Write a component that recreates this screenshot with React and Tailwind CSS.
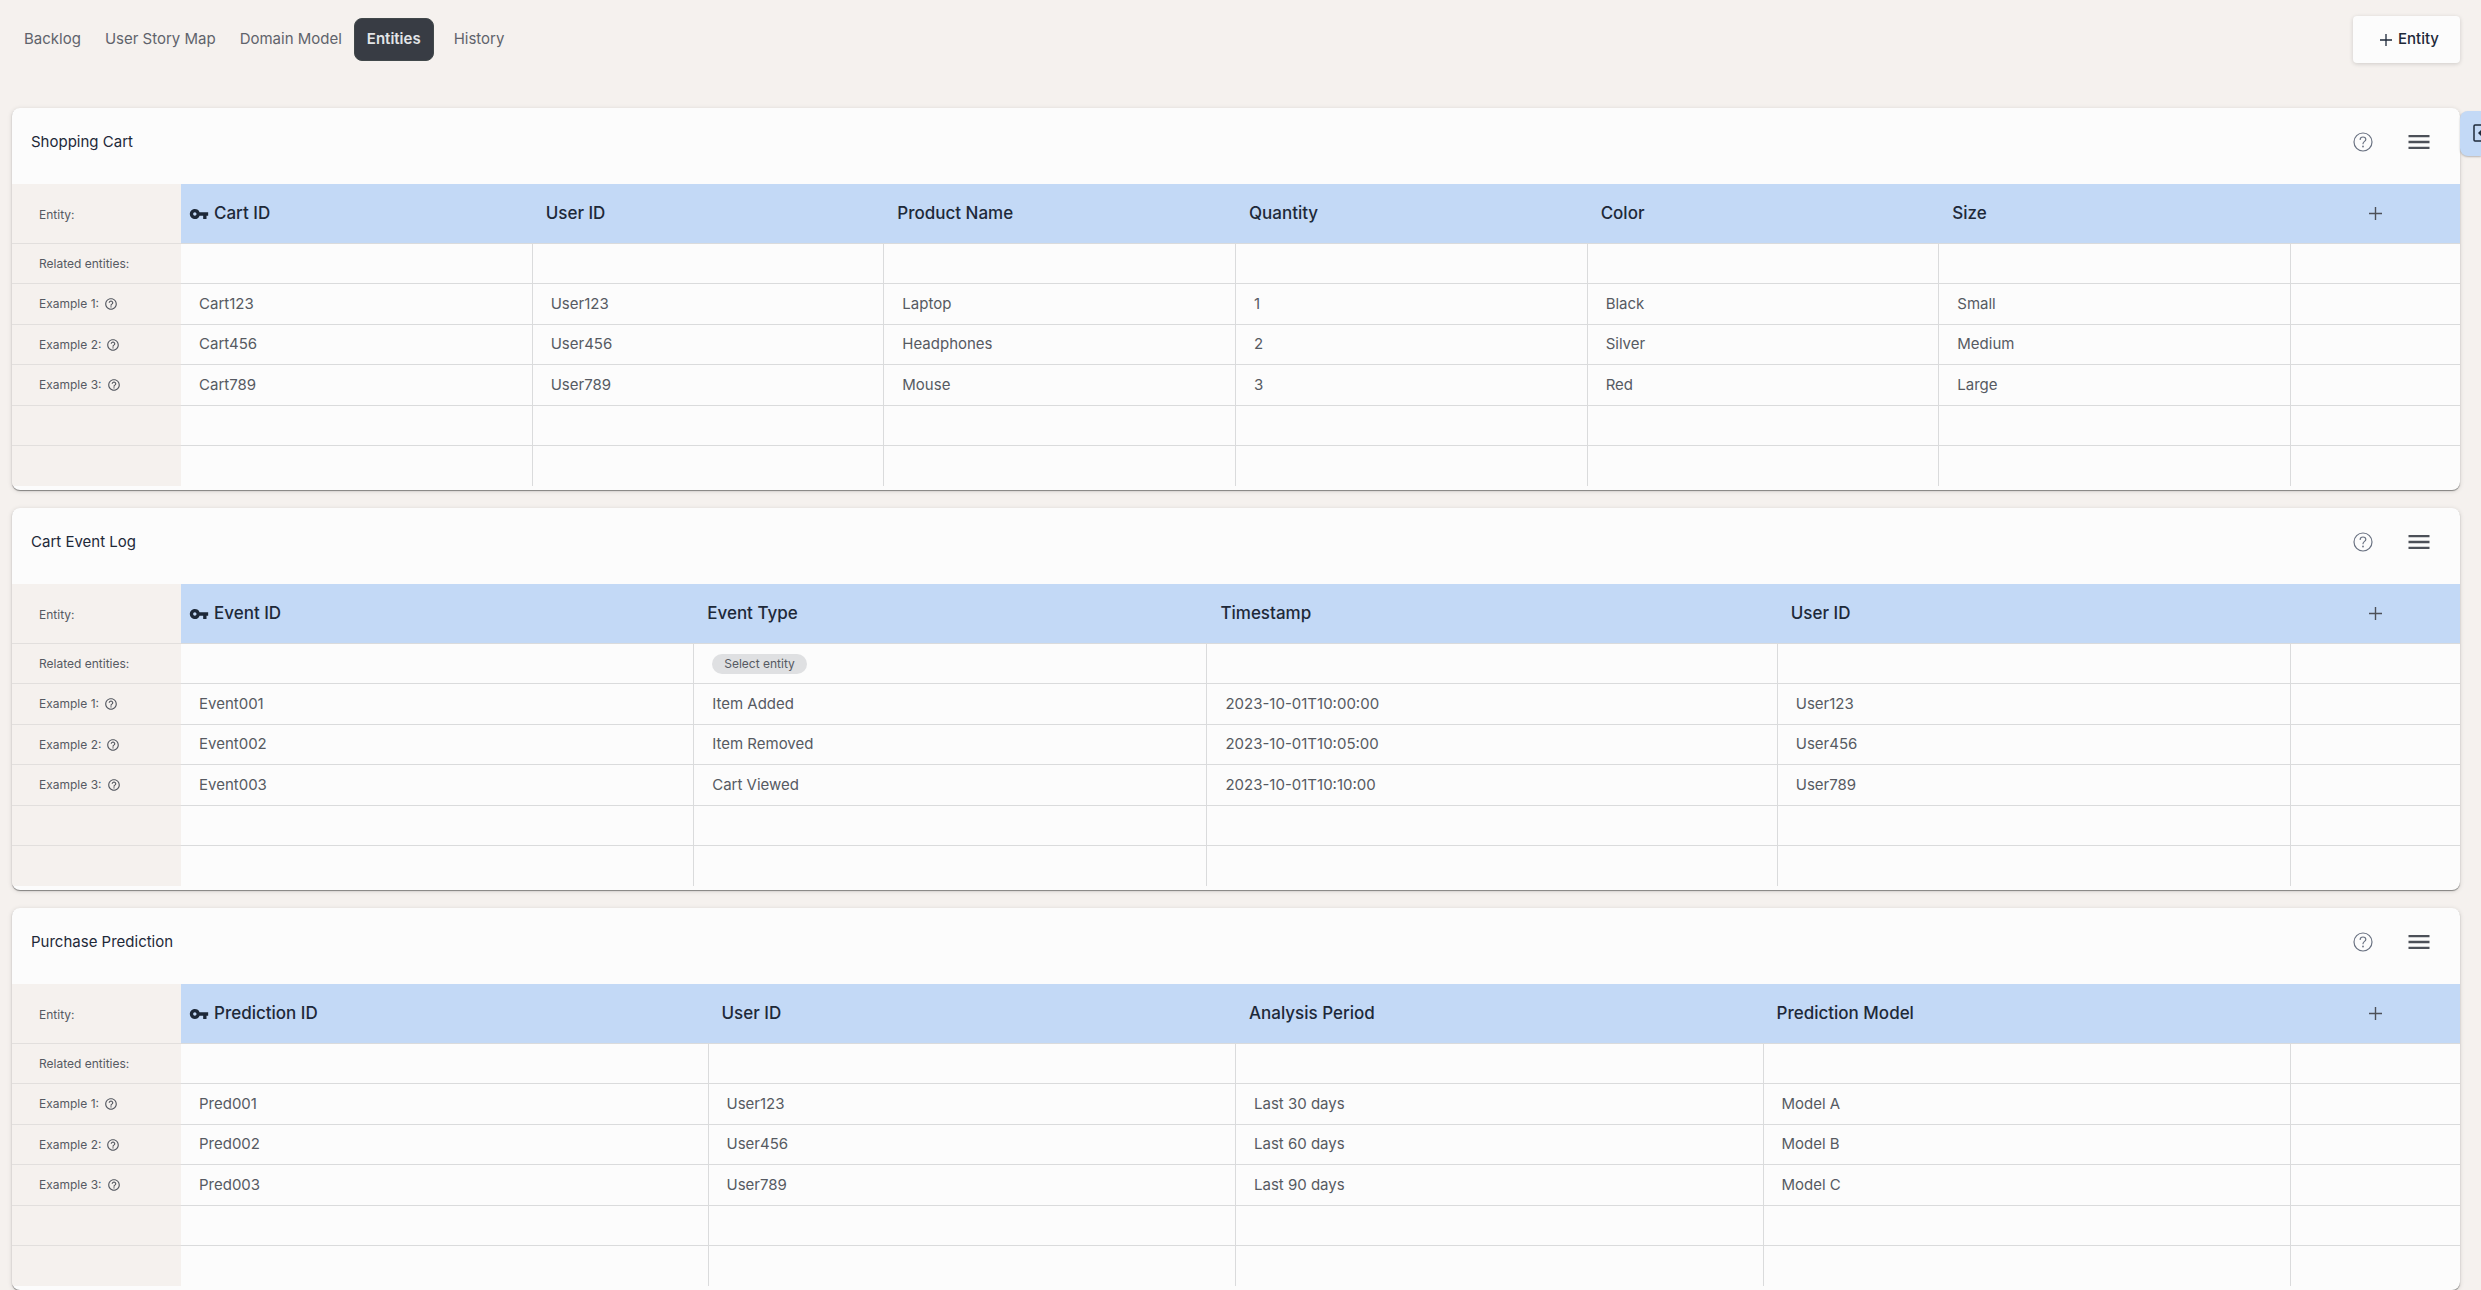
import React from "react";
import { MdVpnKey, MdHelpOutline, MdMenu } from "react-icons/md";

const entities = [
  {
    name: "Shopping Cart",
    columns: ["Cart ID", "User ID", "Product Name", "Quantity", "Color", "Size"],
    widths: [],
    related: {},
    examples: [
      ["Cart123", "User123", "Laptop", "1", "Black", "Small"],
      ["Cart456", "User456", "Headphones", "2", "Silver", "Medium"],
      ["Cart789", "User789", "Mouse", "3", "Red", "Large"],
    ],
  },
  {
    name: "Cart Event Log",
    columns: ["Event ID", "Event Type", "Timestamp", "User ID"],
    widths: ["", "", "w-[23.3%]", ""],
    related: { 1: "Select entity" },
    examples: [
      ["Event001", "Item Added", "2023-10-01T10:00:00", "User123"],
      ["Event002", "Item Removed", "2023-10-01T10:05:00", "User456"],
      ["Event003", "Cart Viewed", "2023-10-01T10:10:00", "User789"],
    ],
  },
  {
    name: "Purchase Prediction",
    columns: ["Prediction ID", "User ID", "Analysis Period", "Prediction Model"],
    widths: [],
    related: {},
    examples: [
      ["Pred001", "User123", "Last 30 days", "Model A"],
      ["Pred002", "User456", "Last 60 days", "Model B"],
      ["Pred003", "User789", "Last 90 days", "Model C"],
    ],
  },
];

function Plus({ className }) {
  return (
    <svg viewBox="0 0 13 13" className={className} fill="none" stroke="currentColor" strokeWidth="1.4" aria-hidden="true">
      <path d="M6.5 0v13M0 6.5h13" />
    </svg>
  );
}

function HelpCircle() {
  return (
    <svg viewBox="0 0 20 20" className="size-5" fill="none" stroke="currentColor" strokeWidth="1.2" strokeLinecap="round" aria-hidden="true">
      <circle cx="10" cy="10" r="9" />
      <path d="M7.2 7.4C7.2 5.9 8.4 5 10 5s2.8 1 2.8 2.4c0 1.9-2.8 2.1-2.8 4.3" />
      <circle cx="10" cy="14.5" r="0.9" fill="currentColor" stroke="none" />
    </svg>
  );
}

function NavTab({ children, active }) {
  return active ? (
    <button className="mr-2 h-[43px] rounded-lg border border-[#41484a] bg-[#383c44] px-3 font-semibold text-[#e3e5e8]" aria-current="page">
      {children}
    </button>
  ) : (
    <button className="h-[43px] px-3">{children}</button>
  );
}

function RowLabel({ children }) {
  return (
    <th scope="row" className="border-t border-[#e2dfdd] bg-[#f5f1ee] pl-[27px] text-left text-xs font-normal">
      {children}
    </th>
  );
}

function Row({ label, cells, tall }) {
  return (
    <tr className={tall ? "h-[41px]" : "h-10"}>
      <RowLabel>{label}</RowLabel>
      {cells.map((cell, i) => (
        <td
          key={i}
          className={`border-t border-[#dadbdc] pl-[18px] ${i < cells.length - 1 ? "border-r" : ""}`}
        >
          {cell}
        </td>
      ))}
    </tr>
  );
}

function EntityCard({ entity }) {
  const { name, columns, widths, related, examples } = entity;
  const blank = [...columns.map(() => ""), ""];
  return (
    <section className="overflow-hidden rounded-lg bg-[#fcfcfc] pb-1 shadow-[0_1px_1px_rgba(0,0,0,0.42),0_1px_5px_rgba(0,0,0,0.14)]">
      <header className="flex h-[76px] items-start justify-between pt-5 pr-[27px] pl-[19px]">
        <h2 className="text-[15px] leading-7 text-gray-800">{name}</h2>
        <div className="flex items-start gap-8">
          <button className="flex h-[27px] items-center text-gray-500" aria-label={`About ${name}`}>
            <HelpCircle />
          </button>
          <button className="text-[#4c5058]" aria-label={`${name} menu`}>
            <MdMenu className="size-7" />
          </button>
        </div>
      </header>
      <table className="w-full table-fixed border-separate border-spacing-0 text-[15px] text-[#565a62]">
        <colgroup>
          <col className="w-[169px]" />
          {columns.map((c, i) => (
            <col key={c} className={widths[i] || ""} />
          ))}
          <col className="w-[169px]" />
        </colgroup>
        <thead>
          <tr className="h-[59px] bg-[#c3d9f6]">
            <th className="bg-[#f5f1ee] pt-0.5 pl-[27px] text-left text-xs font-normal">Entity:</th>
            {columns.map((c, i) => (
              <th key={c} className={`text-left text-[17px] font-medium text-gray-800 ${i === 0 ? "pl-2" : "pl-[13px]"}`}>
                <span className="flex items-center gap-[5px]">
                  {i === 0 && <MdVpnKey className="size-5" />}
                  {c}
                </span>
              </th>
            ))}
            <th>
              <button className="flex w-full justify-center text-[#4c5058]" aria-label="Add column">
                <Plus className="size-[13px]" />
              </button>
            </th>
          </tr>
        </thead>
        <tbody>
          <Row
            label="Related entities:"
            cells={blank.map((_, i) =>
              related[i] ? (
                <button className="block h-5 rounded-full bg-[#dfe0e2] px-3 text-xs">{related[i]}</button>
              ) : (
                ""
              )
            )}
          />
          {examples.map((cells, n) => (
            <Row
              key={n}
              tall={n !== 1}
              label={
                <span className="flex items-center gap-[5px]">
                  Example {n + 1}: <MdHelpOutline className="size-3.5" />
                </span>
              }
              cells={[...cells, ""]}
            />
          ))}
          <Row cells={blank} label="" />
          <Row cells={blank} label="" tall />
        </tbody>
      </table>
    </section>
  );
}

export default function App() {
  return (
    <div className="relative bg-[#f5f1ee] pr-[21px] pl-3 font-['Inter',sans-serif] antialiased">
      <div className="flex h-[108px] items-start justify-between pt-4">
        <nav className="flex pt-0.5 text-[15px] text-[#5f636b]">
          <NavTab>Backlog</NavTab>
          <NavTab>User Story Map</NavTab>
          <NavTab>Domain Model</NavTab>
          <NavTab active>Entities</NavTab>
          <NavTab>History</NavTab>
        </nav>
        <button className="flex h-[47px] items-center gap-1.5 rounded bg-[#fcfcfc] pr-[21px] pl-[27px] text-[15px] font-medium text-gray-800 shadow-[0_1px_4px_rgba(0,0,0,0.16)]">
          <Plus className="size-3" />
          Entity
        </button>
      </div>
      <main className="flex flex-col gap-[18px]">
        {entities.map((e) => (
          <EntityCard key={e.name} entity={e} />
        ))}
      </main>
      <button
        className="absolute top-[111px] right-0 flex h-[45px] w-[21px] items-start overflow-hidden rounded-l-lg bg-[#c3d9f6] pt-[13px] pl-[13px] text-gray-800 shadow-[0_1px_2px_rgba(0,0,0,0.25)]"
        aria-label="Open side panel"
      >
        <svg viewBox="0 0 18 18" className="size-[18px] shrink-0" fill="none" stroke="currentColor" strokeWidth="1.5" aria-hidden="true">
          <rect x="1" y="1" width="16" height="16" rx="1" />
          <path d="M5 9l3.5-3.5v7z" fill="currentColor" stroke="none" />
          <path d="M8 9h5" />
        </svg>
      </button>
    </div>
  );
}
